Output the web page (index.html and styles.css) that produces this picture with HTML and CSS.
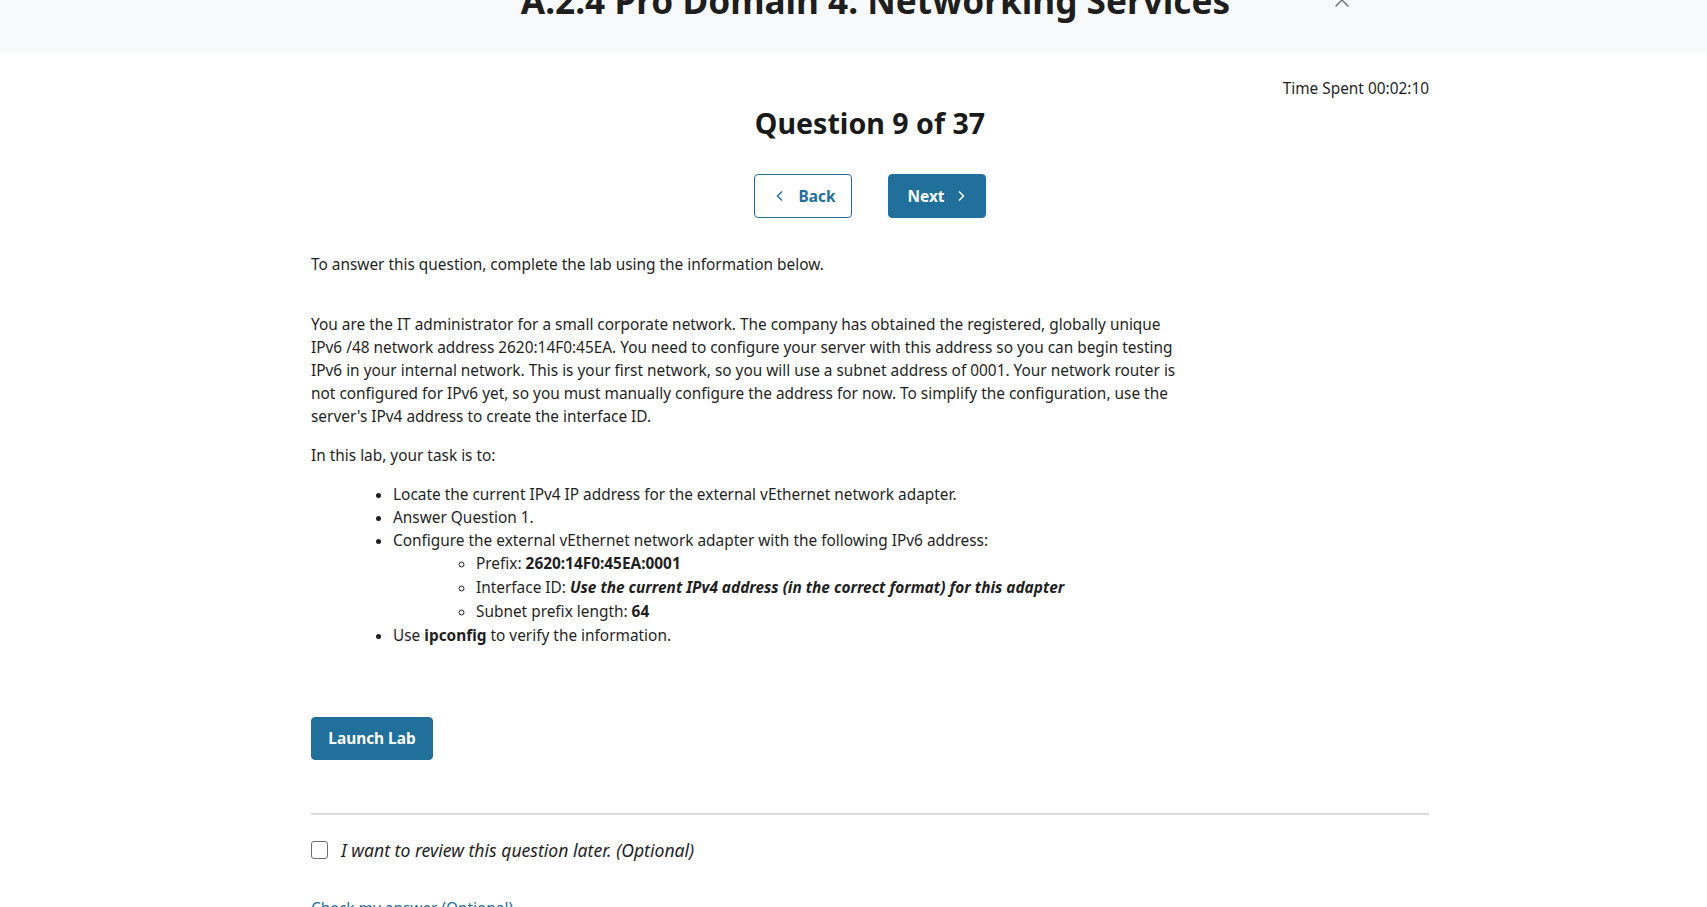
FILE: index.html
```html
<!DOCTYPE html>
<html lang="en">
<head>
<meta charset="utf-8">
<title>Question 9 of 37</title>
<link rel="stylesheet" href="styles.css">
</head>
<body>
<header class="topbar">
  <div class="topbar-inner">
    <div class="topbar-spacer"></div>
    <h2 class="lesson-title">A.2.4 Pro Domain 4: Networking Services</h2>
    <div class="topbar-right">
      <button class="close-btn" aria-label="Close">
        <svg width="16" height="16" viewBox="0 0 16 16"><path d="M2 2 L14 14 M14 2 L2 14" stroke="#6b6f75" stroke-width="1.4" fill="none" stroke-linecap="round"/></svg>
      </button>
    </div>
  </div>
</header>

<main class="container">
  <div class="time-spent">Time Spent 00:02:10</div>
  <h1 class="question-title">Question 9 of 37</h1>
  <div class="nav-buttons">
    <button class="btn btn-outline">
      <svg width="10" height="12" viewBox="0 0 10 12"><path d="M7 1.5 L2.5 6 L7 10.5" stroke="currentColor" stroke-width="1.4" fill="none"/></svg>
      <span>Back</span>
    </button>
    <button class="btn btn-primary">
      <span>Next</span>
      <svg width="10" height="12" viewBox="0 0 10 12"><path d="M3 1.5 L7.5 6 L3 10.5" stroke="currentColor" stroke-width="1.4" fill="none"/></svg>
    </button>
  </div>

  <div class="question-body">
    <p class="intro">To answer this question, complete the lab using the information below.</p>
    <p class="scenario">You are the IT administrator for a small corporate network. The company has obtained the registered, globally unique IPv6 /48 network address 2620:14F0:45EA. You need to configure your server with this address so you can begin testing IPv6 in your internal network. This is your first network, so you will use a subnet address of 0001. Your network router is not configured for IPv6 yet, so you must manually configure the address for now. To simplify the configuration, use the server's IPv4 address to create the interface ID.</p>
    <p class="scenario">In this lab, your task is to:</p>
    <ul class="tasks">
      <li>Locate the current IPv4 IP address for the external vEthernet network adapter.</li>
      <li>Answer Question 1.</li>
      <li>Configure the external vEthernet network adapter with the following IPv6 address:
        <ul class="subtasks">
          <li>Prefix: <strong>2620:14F0:45EA:0001</strong></li>
          <li>Interface ID: <strong><em>Use the current IPv4 address (in the correct format) for this adapter</em></strong></li>
          <li>Subnet prefix length: <strong>64</strong></li>
        </ul>
      </li>
      <li>Use <strong>ipconfig</strong> to verify the information.</li>
    </ul>
  </div>

  <button class="btn btn-primary launch">Launch Lab</button>

  <hr class="divider">

  <label class="review">
    <span class="checkbox"></span>
    <span class="review-text">I want to review this question later. (Optional)</span>
  </label>

  <a class="check-link" href="#">Check my answer (Optional)</a>
</main>
</body>
</html>
```

FILE: styles.css
```css
* { box-sizing: border-box; }

html, body {
  margin: 0;
  padding: 0;
  background: #ffffff;
  font-family: "Noto Sans", "Open Sans", sans-serif;
  color: #1f1f1f;
  overflow: hidden;
}

.topbar {
  height: 53px;
  background: #f8f9fb;
  overflow: hidden;
}

.topbar-inner {
  margin-left: 311px;
  width: 1118px;
  display: grid;
  grid-template-columns: 1fr auto 1fr;
  align-items: start;
}

.lesson-title {
  margin: -21px 0 0 11px;
  font-size: 35.2px;
  line-height: 42px;
  font-weight: 700;
  color: #1e1e1e;
  white-space: nowrap;
}

.topbar-right {
  display: flex;
  justify-content: flex-end;
  padding-right: 79px;
}

.close-btn {
  margin-top: -8px;
  padding: 0;
  border: 0;
  background: transparent;
  width: 16px;
  height: 16px;
  display: block;
}
.close-btn svg { display: block; }

.container {
  margin-left: 311px;
  width: 1118px;
  display: flex;
  flex-direction: column;
  align-items: stretch;
}

.time-spent {
  margin-top: 25px;
  text-align: right;
  font-size: 15.4px;
  line-height: 22px;
  color: #1f1f1f;
}

.question-title {
  margin: 5px 0 0;
  text-align: center;
  font-size: 28.6px;
  line-height: 35px;
  font-weight: 700;
  color: #1a1a1a;
}

.nav-buttons {
  margin-top: 34px;
  display: flex;
  justify-content: center;
  gap: 36px;
}

.btn {
  font-family: "Noto Sans", "Open Sans", sans-serif;
  font-size: 15.4px;
  font-weight: 700;
  border-radius: 4px;
  height: 44px;
  display: inline-flex;
  align-items: center;
  justify-content: center;
  gap: 12px;
  cursor: pointer;
}

.btn-outline {
  width: 98px;
  background: #ffffff;
  color: #21709b;
  border: 1px solid #21709b;
  padding-left: 10px;
  gap: 14px;
}

.btn-primary {
  width: 98px;
  background: #21709b;
  color: #ffffff;
  border: 1px solid #21709b;
}

.question-body {
  margin-top: 35px;
  width: 872px;
  font-size: 15.4px;
  line-height: 23px;
}

.question-body p { margin: 0; }

.intro { margin-bottom: 37px !important; }

.scenario { margin-bottom: 16px !important; }

.tasks {
  margin: 0;
  padding-left: 82px;
  list-style: disc;
}

.tasks li { line-height: 23px; }

.subtasks {
  margin: 0;
  padding-left: 83px;
  list-style: circle;
}

.subtasks li { line-height: 24px; }

.launch {
  margin-top: 70px;
  width: 122px;
  height: 43px;
  align-self: flex-start;
}

.divider {
  margin: 53px 0 0;
  border: 0;
  border-top: 2px solid #dcdcdc;
  width: 100%;
}

.review {
  margin-top: 23px;
  display: flex;
  align-items: center;
  gap: 13px;
}

.checkbox {
  width: 17px;
  height: 18px;
  border: 1.5px solid #6e6e6e;
  border-radius: 3px;
  background: #fff;
  flex: none;
}

.review-text {
  font-style: italic;
  font-size: 17.6px;
  line-height: 24px;
  color: #1f1f1f;
}

.check-link {
  margin-top: 35px;
  font-size: 15.4px;
  line-height: 24px;
  color: #1f6e9c;
  text-decoration: none;
  align-self: flex-start;
}
```
